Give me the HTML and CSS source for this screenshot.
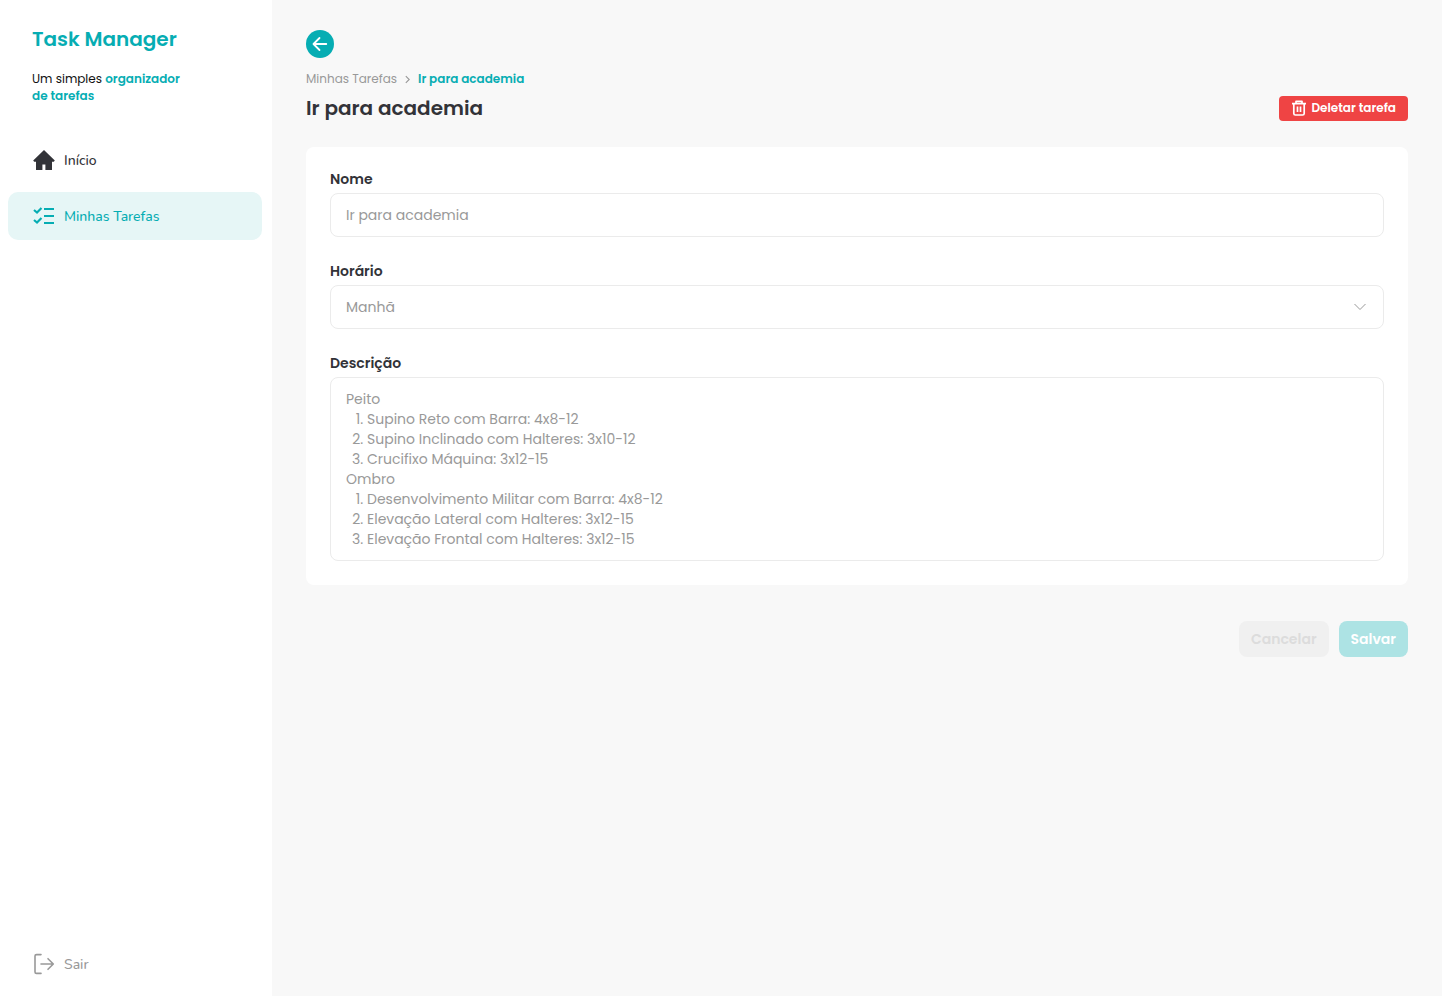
FILE: index.html
```html
<!DOCTYPE html>
<html lang="pt-BR">
<head>
<meta charset="utf-8">
<meta name="viewport" content="width=device-width, initial-scale=1">
<title>Task Manager</title>
<link rel="stylesheet" href="styles.css">
</head>
<body class="app">
<aside class="sidebar">
  <div class="brand">
    <p class="brand-name">Task Manager</p>
    <p class="brand-tagline">Um simples <strong>organizador<br>de tarefas</strong></p>
  </div>
  <nav class="nav">
    <a class="nav-link" href="#inicio">
      <svg class="nav-icon" viewBox="0 0 24 24" fill="currentColor" aria-hidden="true"><path d="M12 2 1.2 12.4l1 1.3H4V22h6.4v-5.500h3V22H20v-8.300h1.800l1-1.300z"/></svg>
      Início
    </a>
    <a class="nav-link nav-link-active" href="#tarefas" aria-current="page">
      <svg class="nav-icon" viewBox="0 0 24 24" fill="none" stroke="currentColor" stroke-width="2.1" aria-hidden="true"><path d="M12 5h10M12 12h10M12 19h10M2 6l3 2.600L9.500 4M2 16l3 2.600L9.500 14"/></svg>
      Minhas Tarefas
    </a>
  </nav>
  <a class="nav-link nav-link-exit" href="#sair">
    <svg class="nav-icon" viewBox="0 0 24 24" fill="none" stroke="currentColor" stroke-width="1.6" stroke-linecap="round" stroke-linejoin="round" aria-hidden="true"><path d="M9 2.600H4.500q-1.500 0-1.500 1.500v15.800q0 1.500 1.500 1.500H9M9 12h12M16 6.700l5.300 5.300-5.300 5.300"/></svg>
    Sair
  </a>
</aside>
<main class="main">
  <button class="back" type="button" aria-label="Voltar">
    <svg class="back-icon" viewBox="0 0 16 16" fill="none" stroke="currentColor" stroke-width="1.8" stroke-linecap="round" stroke-linejoin="round" aria-hidden="true"><path d="M14.300 8H1.800M7.500 2 1.500 8l6 6"/></svg>
  </button>
  <nav class="crumbs" aria-label="Trilha">
    <a class="crumb" href="#tarefas">Minhas Tarefas</a>
    <svg class="crumb-sep" viewBox="0 0 8 8" fill="none" stroke="currentColor" aria-hidden="true"><path d="m2.500 1 3 3-3 3"/></svg>
    <span class="crumb-current" aria-current="page">Ir para academia</span>
  </nav>
  <header class="heading">
    <h1 class="title">Ir para academia</h1>
    <button class="delete" type="button">
      <svg class="delete-icon" viewBox="0 0 16 16" fill="none" stroke="currentColor" stroke-width="1.7" stroke-linejoin="round" aria-hidden="true"><path d="M1 3.700h14M5 3.500V1.300h6v2.200M2.800 4v9.400q0 1.600 1.600 1.600h7.200q1.600 0 1.600-1.600V4M6.500 6.500V12M9.500 6.500V12"/></svg>
      Deletar tarefa
    </button>
  </header>
  <form class="form">
    <div class="card">
      <div class="field">
        <label class="label" for="nome">Nome</label>
        <input class="control" id="nome" type="text" value="Ir para academia">
      </div>
      <div class="field">
        <label class="label" for="horario">Horário</label>
        <div class="select-wrap">
          <select class="control" id="horario"><option>Manhã</option><option>Tarde</option><option>Noite</option></select>
          <svg class="select-arrow" viewBox="0 0 12 12" fill="none" stroke="currentColor" aria-hidden="true"><path d="m.5 3 5.500 5.500L11.500 3"/></svg>
        </div>
      </div>
      <div class="field">
        <span class="label" id="descricao">Descrição</span>
        <div class="control editor" role="textbox" aria-multiline="true" aria-labelledby="descricao" contenteditable="true" spellcheck="false">
          <p class="editor-line">Peito</p>
          <ol class="editor-list">
            <li>Supino Reto com Barra: 4x8-12</li>
            <li>Supino Inclinado com Halteres: 3x10-12</li>
            <li>Crucifixo Máquina: 3x12-15</li>
          </ol>
          <p class="editor-line">Ombro</p>
          <ol class="editor-list">
            <li>Desenvolvimento Militar com Barra: 4x8-12</li>
            <li>Elevação Lateral com Halteres: 3x12-15</li>
            <li>Elevação Frontal com Halteres: 3x12-15</li>
          </ol>
        </div>
      </div>
    </div>
    <div class="actions">
      <button class="action action-cancel" type="button" disabled>Cancelar</button>
      <button class="action action-save" type="submit" disabled>Salvar</button>
    </div>
  </form>
</main>
</body>
</html>
```
FILE: styles.css
```css
:root {
  --teal: #06adb3;
  --ink: #323338;
  --muted: #999;
  --line: #ebebeb;
  --display: Poppins, Inter, sans-serif;
  --nav: Nunito, "Open Sans", sans-serif;
}
* { box-sizing: border-box; }
.app {
  display: flex;
  min-height: 100vh;
  margin: 0;
  background: #f8f8f8;
  color: var(--ink);
  font: 400 14px/20px var(--display);
}
button, input, select { font: inherit; }
.sidebar {
  display: flex;
  flex-direction: column;
  flex: 0 0 272px;
  padding: 24px 10px 8px 8px;
  background: #fff;
}
.brand { padding: 0 24px; }
.brand-name {
  margin: 0 0 16px;
  color: var(--teal);
  font-size: 20px;
  font-weight: 600;
  line-height: 30px;
}
.brand-tagline {
  margin: 0;
  color: #111;
  font-size: 12px;
  line-height: 17px;
}
.brand-tagline strong { color: var(--teal); font-weight: 600; }
.nav {
  display: flex;
  flex-direction: column;
  gap: 8px;
  margin-top: 32px;
}
.nav-link {
  display: flex;
  align-items: center;
  gap: 8px;
  height: 48px;
  padding: 0 24px;
  border-radius: 10px;
  color: var(--ink);
  font: 500 14px/21px var(--nav);
  text-decoration: none;
}
.nav-icon { width: 24px; height: 24px; }
.nav-link-active { background: #e6f6f6; color: var(--teal); }
.nav-link-exit { margin-top: auto; color: var(--muted); }
.main {
  flex: 1;
  min-width: 0;
  padding: 30px 34px;
}
.back {
  display: grid;
  place-items: center;
  width: 28px;
  height: 28px;
  padding: 0;
  border: 0;
  border-radius: 50%;
  background: var(--teal);
  color: #fff;
}
.back-icon { width: 16px; height: 16px; }
.crumbs {
  display: flex;
  align-items: center;
  gap: 6px;
  margin-top: 11px;
  font-size: 12px;
}
.crumb, .crumb-sep { color: var(--muted); text-decoration: none; }
.crumb-sep { width: 9px; height: 9px; }
.crumb-current { color: var(--teal); font-weight: 600; }
.heading {
  display: flex;
  align-items: center;
  justify-content: space-between;
  margin-top: 3px;
}
.title {
  margin: 0;
  font-size: 20px;
  font-weight: 600;
  line-height: 32px;
}
.delete {
  display: flex;
  align-items: center;
  gap: 4px;
  height: 25px;
  padding: 0 12px;
  border: 0;
  border-radius: 4px;
  background: #ef4444;
  color: #fff;
  font-size: 12px;
  font-weight: 600;
}
.delete-icon { width: 16px; height: 16px; }
.card {
  display: flex;
  flex-direction: column;
  gap: 26px;
  margin-top: 23px;
  padding: 24px;
  border-radius: 8px;
  background: #fff;
}
.field { display: flex; flex-direction: column; gap: 6px; }
.label {
  font-weight: 600;
  line-height: 16px;
}
.control {
  width: 100%;
  height: 44px;
  padding: 0 15px;
  border: 1px solid var(--line);
  border-radius: 8px;
  background: #fff;
  color: var(--muted);
}
.select-wrap { position: relative; }
.select-wrap .control { display: block; appearance: none; }
.select-arrow {
  position: absolute;
  top: 16px;
  right: 18px;
  width: 12px;
  height: 12px;
  color: var(--muted);
  pointer-events: none;
}
.editor { height: auto; padding: 11px 15px; }
.editor-line { margin: 0; }
.editor-list { margin: 0; padding-left: 21px; }
.actions {
  display: flex;
  justify-content: flex-end;
  gap: 10px;
  margin-top: 36px;
}
.action {
  height: 36px;
  padding: 0 12px;
  border: 0;
  border-radius: 8px;
  font-weight: 600;
}
.action-cancel { background: #f0f0f0; color: #dcdcdc; }
.action-save { background: #ade3e4; color: #fff; }
```
